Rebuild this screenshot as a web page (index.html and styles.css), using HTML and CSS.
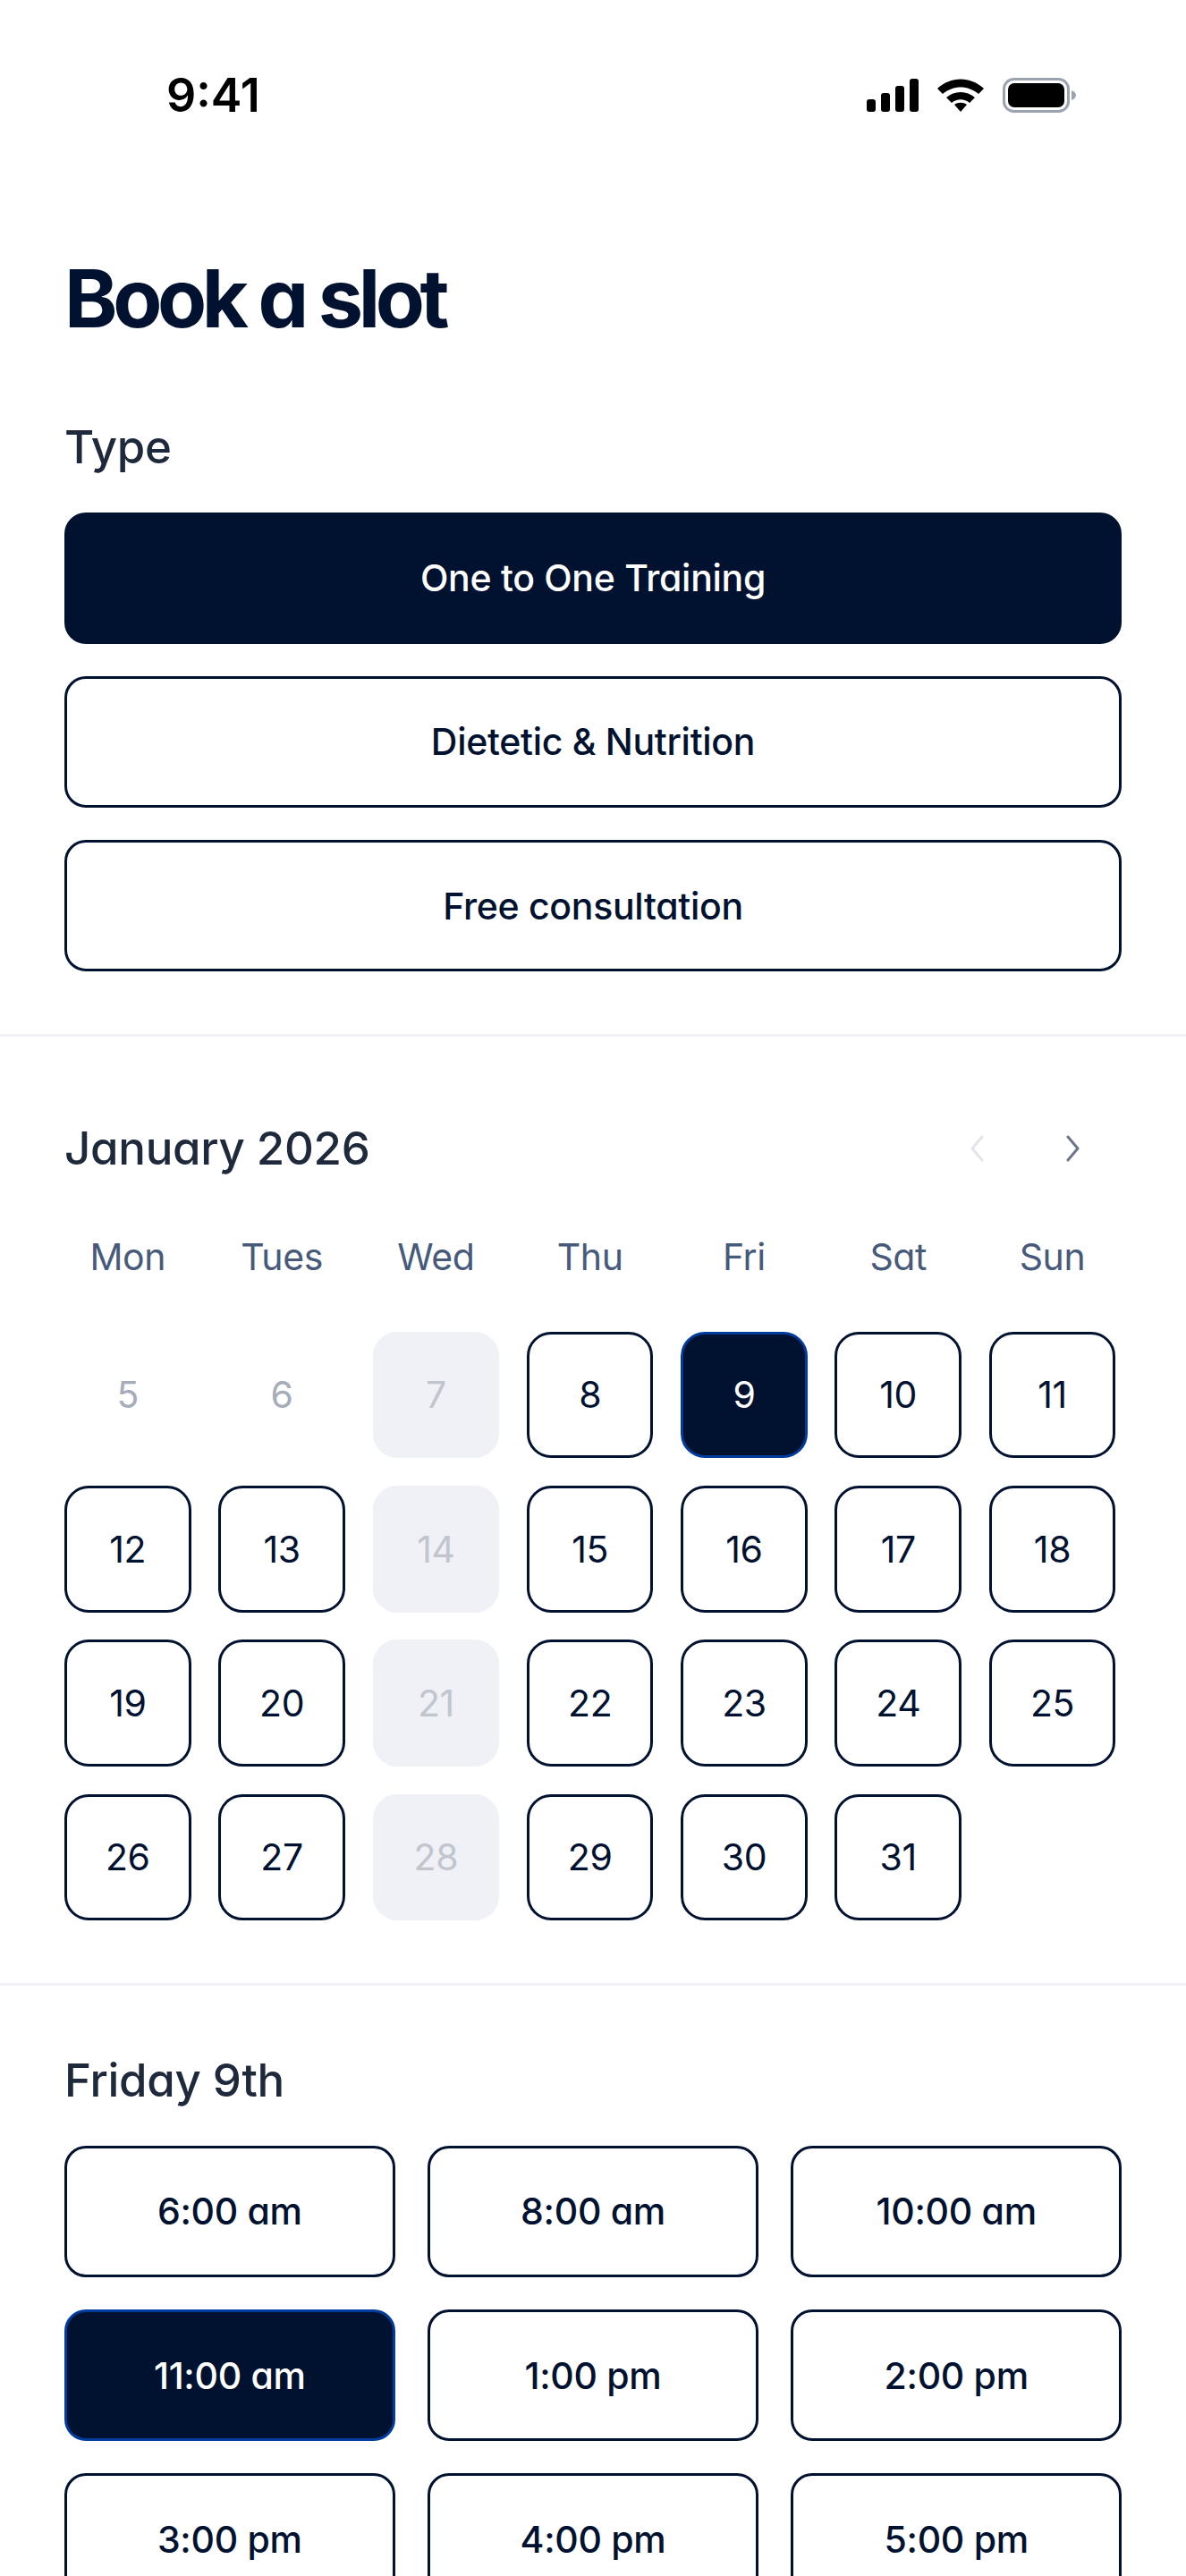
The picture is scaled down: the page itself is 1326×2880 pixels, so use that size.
FILE: index.html
```html
<!DOCTYPE html>
<html lang="en">
<head>
    <meta charset="UTF-8">
    <meta name="viewport" content="width=device-width, initial-scale=1.0">
    <title>Book a slot</title>
    <link rel="stylesheet" href="styles.css">
</head>
<body>
    <div class="status-bar">
        <span class="status-time">9:41</span>
        <div class="status-icons">
            <svg class="icon-signal" width="58" height="37" viewBox="0 0 58 37">
                <rect x="0" y="23" width="10" height="14" rx="3"/>
                <rect x="16" y="16" width="10" height="21" rx="3"/>
                <rect x="32" y="8" width="10" height="29" rx="3"/>
                <rect x="48" y="0" width="10" height="37" rx="3"/>
            </svg>
            <svg class="icon-wifi" width="52" height="37" viewBox="0 0 52 37">
                <path d="M0 11 C15 -3 37 -3 52 11 L46 17 C34 7 18 7 6 17 Z"/>
                <path d="M10 21 C19 13 33 13 42 21 L36 27 C30 22 22 22 16 27 Z"/>
                <path d="M19 29 C23 26 29 26 33 29 L26 37 Z"/>
            </svg>
            <svg class="icon-battery" width="82" height="39" viewBox="0 0 82 39">
                <rect x="1.5" y="1.5" width="72" height="36" rx="11" fill="none" stroke="#9aa3af" stroke-width="3"/>
                <rect x="6" y="6" width="63" height="27" rx="7"/>
                <path d="M77 14 C80 15 82 17 82 19.5 C82 22 80 24 77 25 Z" fill="#9aa3af"/>
            </svg>
        </div>
    </div>

    <h1 class="page-title">Book a slot</h1>

    <section class="section section-type">
        <h2 class="section-title">Type</h2>
        <div class="type-list">
            <button class="slot-btn selected">One to One Training</button>
            <button class="slot-btn">Dietetic &amp; Nutrition</button>
            <button class="slot-btn">Free consultation</button>
        </div>
    </section>

    <section class="section section-calendar">
        <div class="month-row">
            <h2 class="section-title">January 2026</h2>
            <div class="month-nav">
                <svg class="chevron" width="16" height="30" viewBox="0 0 16 30"><path d="M14 2 L3 15 L14 28" stroke="#e2e6ec"/></svg>
                <svg class="chevron" width="16" height="30" viewBox="0 0 16 30"><path d="M2 2 L13 15 L2 28" stroke="#6b7688"/></svg>
            </div>
        </div>
        <div class="calendar-grid">
            <div class="weekday">Mon</div>
            <div class="weekday">Tues</div>
            <div class="weekday">Wed</div>
            <div class="weekday">Thu</div>
            <div class="weekday">Fri</div>
            <div class="weekday">Sat</div>
            <div class="weekday">Sun</div>

            <div class="day past">5</div>
            <div class="day past">6</div>
            <div class="day closed">7</div>
            <div class="day">8</div>
            <div class="day selected">9</div>
            <div class="day">10</div>
            <div class="day">11</div>

            <div class="day">12</div>
            <div class="day">13</div>
            <div class="day closed">14</div>
            <div class="day">15</div>
            <div class="day">16</div>
            <div class="day">17</div>
            <div class="day">18</div>

            <div class="day">19</div>
            <div class="day">20</div>
            <div class="day closed">21</div>
            <div class="day">22</div>
            <div class="day">23</div>
            <div class="day">24</div>
            <div class="day">25</div>

            <div class="day">26</div>
            <div class="day">27</div>
            <div class="day closed">28</div>
            <div class="day">29</div>
            <div class="day">30</div>
            <div class="day">31</div>
        </div>
    </section>

    <section class="section section-times">
        <h2 class="section-title">Friday 9th</h2>
        <div class="time-grid">
            <button class="slot-btn">6:00 am</button>
            <button class="slot-btn">8:00 am</button>
            <button class="slot-btn">10:00 am</button>
            <button class="slot-btn selected">11:00 am</button>
            <button class="slot-btn">1:00 pm</button>
            <button class="slot-btn">2:00 pm</button>
            <button class="slot-btn">3:00 pm</button>
            <button class="slot-btn">4:00 pm</button>
            <button class="slot-btn">5:00 pm</button>
        </div>
    </section>
</body>
</html>
```

FILE: styles.css
```css
html, body {
    margin: 0;
    height: 2880px;
    overflow: hidden;
}

body {
    background-color: white;
    font-family: Inter, "Noto Sans", sans-serif;
    font-feature-settings: "cv11";
    color: #001230;
}

.status-bar {
    display: flex;
    justify-content: space-between;
    align-items: center;
    height: 39px;
    padding: 87px 123px 0 186px;
}

.status-time {
    font-size: 52px;
    font-weight: 600;
    color: black;
}

.status-icons {
    display: flex;
    align-items: center;
    gap: 21px;
}

.status-icons svg {
    display: block;
    fill: black;
}

.page-title {
    margin: 0;
    padding: 152px 72px 0;
    font-size: 90px;
    line-height: 112px;
    font-weight: 700;
    letter-spacing: -5.4px;
}

.section {
    padding: 0 72px;
}

.section-title {
    margin: 0;
    font-size: 51px;
    line-height: 60px;
    font-weight: 500;
    letter-spacing: -0.3px;
    color: #1e293b;
}

.section-type {
    padding-top: 80px;
    padding-bottom: 70px;
}

.section-type .section-title {
    margin-bottom: 43px;
}

.type-list {
    display: flex;
    flex-direction: column;
    gap: 36.6px;
}

.slot-btn {
    display: block;
    box-sizing: border-box;
    height: 146.6px;
    padding: 0;
    background-color: white;
    color: #001230;
    border: 3px solid #001230;
    border-radius: 24px;
    font-family: inherit;
    font-feature-settings: inherit;
    font-size: 41px;
    font-weight: 500;
    letter-spacing: -0.3px;
}

.slot-btn.selected {
    background-color: #001230;
    border-color: #001230;
    color: white;
}

.time-grid .slot-btn.selected {
    border-color: #003c9e;
}

.section-calendar {
    border-top: 3px solid #f0f2f6;
    border-bottom: 3px solid #f0f2f6;
    padding-top: 95px;
    padding-bottom: 70px;
}

.month-row {
    display: flex;
    justify-content: space-between;
    align-items: center;
    padding-right: 46px;
}

.month-nav {
    display: flex;
    gap: 92px;
}

.chevron {
    display: block;
}

.chevron path {
    fill: none;
    stroke-width: 3;
    stroke-linecap: round;
    stroke-linejoin: round;
}

.calendar-grid {
    display: grid;
    grid-template-columns: repeat(7, 141.6px);
    grid-template-rows: 83px;
    grid-auto-rows: 141.6px;
    gap: 30.7px;
    margin-top: 61px;
}

.weekday {
    height: 60px;
    line-height: 60px;
    text-align: center;
    font-size: 41px;
    letter-spacing: -0.4px;
    color: #475a7a;
}

.day {
    display: flex;
    justify-content: center;
    align-items: center;
    box-sizing: border-box;
    border: 3px solid #001230;
    border-radius: 27px;
    font-size: 41px;
    letter-spacing: -0.4px;
}

.day.past {
    border-color: transparent;
    color: #a6acb8;
}

.day.closed {
    background-color: #eff1f6;
    border-color: #eff1f6;
    color: #c0c5ce;
}

.day.selected {
    background-color: #001230;
    border-color: #003c9e;
    color: white;
}

.section-times {
    padding-top: 76px;
}

.section-times .section-title {
    margin-bottom: 43px;
}

.time-grid {
    display: grid;
    grid-template-columns: repeat(3, 1fr);
    gap: 36.6px;
}
```
